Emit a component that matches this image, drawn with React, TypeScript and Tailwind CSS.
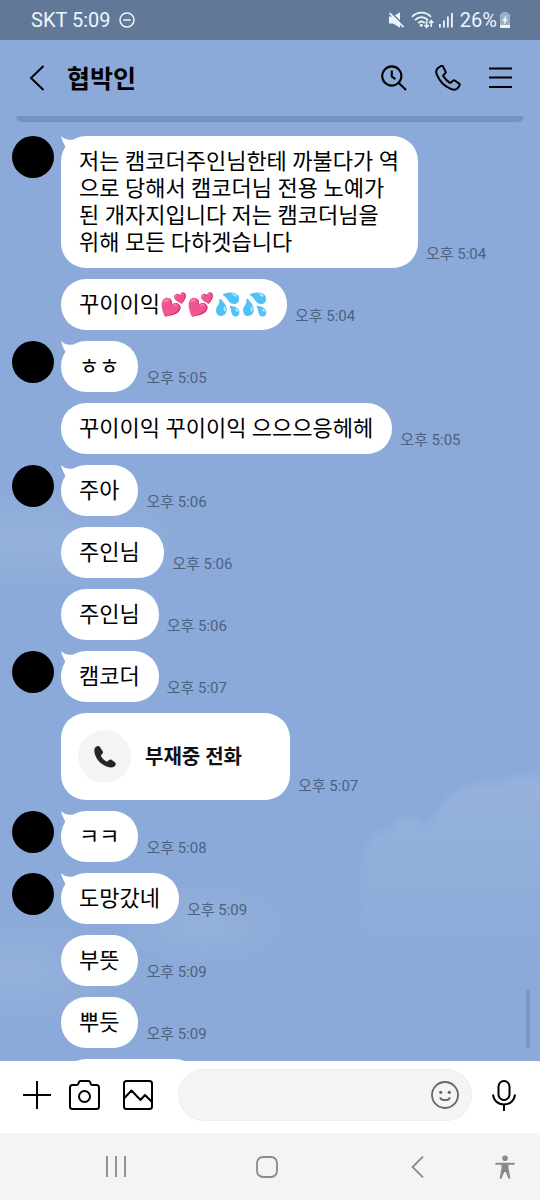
import React from 'react';
import clsx from 'clsx';

interface Message {
  id: number;
  type: 'text' | 'call' | 'pending';
  text: string;
  time: string;
  first?: boolean;
}

const messages: Message[] = [
  {
    id: 1,
    type: 'text',
    text: '저는 캠코더주인님한테 까불다가 역\n으로 당해서 캠코더님 전용 노예가\n된 개자지입니다 저는 캠코더님을\n위해 모든 다하겟습니다',
    time: '오후 5:04',
    first: true,
  },
  { id: 2, type: 'text', text: '꾸이이익💕💕💦💦', time: '오후 5:04' },
  { id: 3, type: 'text', text: 'ㅎㅎ', time: '오후 5:05', first: true },
  { id: 4, type: 'text', text: '꾸이이익 꾸이이익 으으으응헤헤', time: '오후 5:05' },
  { id: 5, type: 'text', text: '주아', time: '오후 5:06', first: true },
  { id: 6, type: 'text', text: '주인님 ', time: '오후 5:06' },
  { id: 7, type: 'text', text: '주인님', time: '오후 5:06' },
  { id: 8, type: 'text', text: '캠코더', time: '오후 5:07', first: true },
  { id: 9, type: 'call', text: '부재중 전화', time: '오후 5:07' },
  { id: 10, type: 'text', text: 'ㅋㅋ', time: '오후 5:08', first: true },
  { id: 11, type: 'text', text: '도망갔네', time: '오후 5:09', first: true },
  { id: 12, type: 'text', text: '부뜻', time: '오후 5:09' },
  { id: 13, type: 'text', text: '뿌듯', time: '오후 5:09' },
  { id: 14, type: 'pending', text: '', time: '' },
];

function StatusBar() {
  return (
    <div className="flex h-10 shrink-0 items-center bg-[#627897] pr-[29px] pl-[31px] text-xl text-[#edf5ff]">
      <span>SKT 5:09</span>
      <svg width="16" height="16" viewBox="0 0 16 16" fill="none" stroke="currentColor" strokeWidth="1.5" className="ml-2">
        <circle cx="8" cy="8" r="7" />
        <path d="M4.2 8h7.6" />
      </svg>
      <div className="ml-auto flex items-center">
        {/* Muted speaker */}
        <svg width="17" height="16" viewBox="0 0 17 16" fill="currentColor">
          <path d="M1 4.500h4L12 .2v15.600L5 11.500H1z" />
          <path d="M2.800 .2l14 14" stroke="#627897" strokeWidth="1.500" />
          <path d="M1.600 1.200l14 14" stroke="currentColor" strokeWidth="1.700" />
        </svg>
        {/* Wifi with traffic arrows */}
        <svg width="24" height="18" viewBox="0 0 24 18" fill="none" stroke="currentColor" strokeWidth="1.8" className="ml-1.5">
          <path d="M1 5.800C6 .2 15 .2 20 5.800M4 9.200c3.800-4 9.200-4 13 0M7.200 12.200c2-2 4.600-2 6.600 0" />
          <circle cx="10.200" cy="14.300" r="1.500" fill="currentColor" stroke="none" />
          <path d="M15.600 9.500v6.500M13.400 14l2.200 2.300 2.200-2.300M20.200 16V10M18 12l2.200-2.300 2.200 2.300" strokeWidth="1.500" />
        </svg>
        <svg width="15" height="16" viewBox="0 0 15 16" fill="currentColor" className="ml-1">
          <path d="M0 12h1.800v3.500H0zM4 8.500h1.800v7H4zM8 4.500h1.800v11H8zM12 1h1.800v14.500H12z" />
        </svg>
        <span className="ml-1.5">26%</span>
        <svg width="12" height="16" viewBox="0 0 12 16" className="ml-0.5">
          <path d="M3.500 0h5v1.500H10q1 0 1 1V16H1V2.500q0-1 1-1h1.500z" fill="#9dadc3" />
          <path d="M1 13h10v2q0 1-1 1H2q-1 0-1-1z" fill="currentColor" />
          <path d="M7.500 3L3.200 8.800h2.300L4.700 13l4.100-5.800H6.600z" fill="currentColor" />
        </svg>
      </div>
    </div>
  );
}

function ChatHeader() {
  return (
    <header className="flex h-[76px] shrink-0 items-center pr-7 pl-[29px] text-black">
      <button aria-label="뒤로">
        <svg width="16" height="26" viewBox="0 0 16 26" fill="none" stroke="currentColor" strokeWidth="2">
          <path d="M14.500 1L2 13l12.500 12" />
        </svg>
      </button>
      <h1 className="ml-[22px] pt-1 text-[25px] leading-8 font-bold">협박인</h1>
      <div className="ml-auto flex items-center gap-7">
        <button aria-label="검색">
          <svg width="26" height="26" viewBox="0 0 26 26" fill="none" stroke="currentColor" strokeWidth="2.100">
            <circle cx="10.800" cy="11" r="9.600" />
            <path d="M17.600 17.800L25 25M10.800 5.500v6l3.600 2.700" />
          </svg>
        </button>
        <button aria-label="통화">
          <svg width="26" height="26" viewBox="0 0 26 26" fill="none" stroke="currentColor" strokeWidth="2" strokeLinejoin="round">
            <path d="M5.600 1.200L2.900 3.100C1 4.600.9 7.500 2 10c2.600 6.200 7.700 11.300 13.800 13.900 2.500 1.100 5 1.200 6.600-.5l2-2.500c.6-.8.500-1.700-.3-2.300l-4-2.900c-.8-.6-1.700-.5-2.400.2l-1.600 1.600c-.5.400-1 .4-1.500.1-2.500-1.700-4.500-3.700-6.200-6.200-.3-.5-.3-1 .1-1.500l1.600-1.500c.7-.7.8-1.600.2-2.400L8.100 1.600c-.6-.8-1.700-.9-2.500-.4z" />
          </svg>
        </button>
        <button aria-label="메뉴">
          <svg width="23" height="22" viewBox="0 0 23 22" fill="none" stroke="currentColor" strokeWidth="2">
            <path d="M0 1.500h23M0 10.500h23M0 20h23" />
          </svg>
        </button>
      </div>
    </header>
  );
}

function Clouds() {
  return (
    <svg
      className="absolute inset-0 h-full w-full"
      viewBox="0 0 540 945"
      preserveAspectRatio="none"
      aria-hidden="true"
    >
      <defs>
        <linearGradient id="cloud" x1="0" y1="0" x2="0" y2="1">
          <stop offset="0" stopColor="#fff" stopOpacity="0.09" />
          <stop offset="1" stopColor="#fff" stopOpacity="0" />
        </linearGradient>
        <radialGradient id="haze">
          <stop offset="0" stopColor="#fff" stopOpacity="0.08" />
          <stop offset="1" stopColor="#fff" stopOpacity="0" />
        </radialGradient>
        <filter id="soft">
          <feGaussianBlur stdDeviation="3" />
        </filter>
      </defs>
      <path
        d="M362 850V745q2-12 10-22 6-10 20-10 8-14 22-12 8 4 10 12 12-14 22-30 22-20 52-14 14-12 52-8v189z"
        fill="url(#cloud)"
        filter="url(#soft)"
      />
      <g fill="url(#haze)">
        <ellipse cx="30" cy="425" rx="170" ry="55" />
        <ellipse cx="20" cy="855" rx="110" ry="55" />
        <ellipse cx="205" cy="810" rx="90" ry="45" />
      </g>
    </svg>
  );
}

function CallCard({ text }: { text: string }) {
  return (
    <button className="flex h-[87px] w-[229px] items-center rounded-[25px] bg-white pl-[17px]">
      <span className="flex h-[53px] w-[53px] items-center justify-center rounded-full bg-[#f4f4f4]">
        <svg width="24" height="24" viewBox="0 0 24 24" fill="#262626">
          <path d="M4.200 1.200C2.300 1.700 1.200 3.400 1.300 5.600c.4 8.500 8.200 16.300 16.700 16.900 2.200.1 4-1 4.600-2.800.3-1 .1-1.800-.7-2.400l-3.500-2.500c-.8-.6-1.700-.5-2.400.1l-1.500 1.300c-.5.4-1 .4-1.500.1-2-1.300-3.500-2.900-4.800-4.900-.3-.5-.3-1 .1-1.400l1.200-1.500c.6-.7.7-1.500.2-2.300L7.200 2.500C6.500 1.300 5.500.9 4.200 1.200z" />
        </svg>
      </span>
      <span className="ml-3.5 text-xl font-bold text-[#111]">{text}</span>
    </button>
  );
}

function MessageRow({ message }: { message: Message }) {
  return (
    <li className="flex items-start">
      <div className={clsx('mr-[7px] h-[42px] w-[42px] shrink-0 rounded-full', message.first && 'bg-black')} />
      <div className="flex items-end">
        {message.type === 'call' && <CallCard text={message.text} />}
        {message.type === 'pending' && <div className="h-[51px] w-[139px] rounded-[25px] bg-white" />}
        {message.type === 'text' && (
          <div className="relative rounded-[25px] bg-white py-3 pr-[19px] pl-[18px]">
            {message.first && (
              <svg width="16" height="16" viewBox="0 0 16 16" fill="#fff" className="absolute top-0 left-0">
                <path d="M0 0C3 3 6 4.200 12 3.500L15 8 8 15 4.500 11C2.500 7.500 1 4 0 0z" />
              </svg>
            )}
            <p className="relative text-[22px] leading-[27px] whitespace-pre text-black">{message.text}</p>
          </div>
        )}
        <time className="mb-1 ml-2 text-[15px] leading-5 whitespace-nowrap text-[#4d6180]">{message.time}</time>
      </div>
    </li>
  );
}

function Composer() {
  return (
    <form className="flex h-[72px] shrink-0 items-center bg-white pr-6 pb-1 pl-[23px] text-black" onSubmit={(e) => e.preventDefault()}>
      <button type="button" aria-label="추가" className="shrink-0">
        <svg width="28" height="28" viewBox="0 0 28 28" fill="none" stroke="currentColor" strokeWidth="2">
          <path d="M0 14h28M14 0v28" />
        </svg>
      </button>
      <button type="button" aria-label="카메라" className="ml-[18px] shrink-0">
        <svg width="31" height="30" viewBox="0 0 31 30" fill="none" stroke="currentColor" strokeWidth="2" strokeLinejoin="round">
          <path d="M3.500 5H8c1.500 0 1.300-1.200 1.800-2.600C10.200 1.300 10.500 1 11.500 1h8c1 0 1.300.3 1.700 1.400.5 1.400.3 2.600 1.800 2.600h4.500C29 5 30 6 30 7.500V26.500c0 1.500-1 2.500-2.500 2.500h-24C2 29 1 28 1 26.500V7.500C1 6 2 5 3.500 5z" />
          <circle cx="15.500" cy="16.500" r="5.500" />
        </svg>
      </button>
      <button type="button" aria-label="사진" className="ml-[23px] shrink-0">
        <svg width="30" height="30" viewBox="0 0 30 30" fill="none" stroke="currentColor" strokeWidth="2" strokeLinejoin="round">
          <rect x="1" y="1" width="28" height="28" rx="2.500" />
          <path d="M1 18.500l7.500-8 9 9.500 4.500-5 7 7" />
        </svg>
      </button>
      <div className="ml-[25px] flex h-[52px] min-w-0 flex-1 items-center rounded-full border border-[#ededed] bg-[#f4f4f4] pr-3 pl-5">
        <input aria-label="메시지 입력" className="min-w-0 flex-1 bg-transparent text-[22px] outline-none" />
        <button type="button" aria-label="이모티콘" className="shrink-0">
          <svg width="28" height="28" viewBox="0 0 28 28" fill="none" stroke="#666" strokeWidth="1.800">
            <circle cx="14" cy="14" r="13" />
            <path d="M9 16.500c1.800 3.600 8.200 3.600 10 0" />
            <circle cx="9.700" cy="11.300" r="1.600" fill="#666" stroke="none" />
            <circle cx="18.300" cy="11.300" r="1.600" fill="#666" stroke="none" />
          </svg>
        </button>
      </div>
      <button type="button" aria-label="음성 메시지" className="ml-5 shrink-0">
        <svg width="24" height="31" viewBox="0 0 24 31" fill="none" stroke="currentColor" strokeWidth="2">
          <rect x="6.500" y="1" width="11" height="19" rx="5.500" />
          <path d="M1 14.500c.5 6 5 10 11 10s10.500-4 11-10M12 24.500V31" />
        </svg>
      </button>
    </form>
  );
}

function NavBar() {
  return (
    <nav className="flex h-[67px] shrink-0 items-center bg-[#f4f4f4] pl-10 text-[#8a8a8a]">
      <button aria-label="최근 앱" className="flex flex-1 justify-center">
        <svg width="20" height="21" viewBox="0 0 20 21" fill="none" stroke="currentColor" strokeWidth="1.800">
          <path d="M1 0v21M10 0v21M19 0v21" />
        </svg>
      </button>
      <button aria-label="홈" className="flex flex-1 justify-center">
        <svg width="22" height="22" viewBox="0 0 22 22" fill="none" stroke="currentColor" strokeWidth="1.800">
          <rect x="1" y="1" width="20" height="20" rx="6" />
        </svg>
      </button>
      <button aria-label="이전" className="flex flex-1 justify-center">
        <svg width="13" height="22" viewBox="0 0 13 22" fill="none" stroke="currentColor" strokeWidth="1.800">
          <path d="M12 .5L1.500 11 12 21.500" />
        </svg>
      </button>
      <button aria-label="접근성" className="w-[47px] pl-0.5">
        <svg width="20" height="24" viewBox="0 0 20 24" fill="currentColor">
          <circle cx="10" cy="3.200" r="2.800" />
          <path d="M1 7.800h18c1 0 1 2 0 2h-5.500V13l1.800 10c.1 1-1.600 1.200-1.900.3L10.700 17H9.300l-2.700 6.300c-.3.900-2 .7-1.900-.3L6.500 13V9.800H1c-1 0-1-2 0-2z" />
        </svg>
      </button>
    </nav>
  );
}

export default function App() {
  return (
    <div className="flex h-screen flex-col overflow-hidden bg-[#8caad9] font-['Roboto','Noto_Sans_CJK_KR',sans-serif]">
      <StatusBar />
      <ChatHeader />
      <main className="relative min-h-0 flex-1 overflow-hidden">
        <Clouds />
        {/* Bottom edge of the collapsed notice */}
        <div className="mx-4 h-1.5 rounded-b-[10px] bg-[#7793bb]" />
        <ul className="relative mt-3.5 flex flex-col gap-[11px] pl-3">
          {messages.map((message) => (
            <MessageRow key={message.id} message={message} />
          ))}
        </ul>
        <div className="absolute right-2.5 bottom-3 h-[60px] w-1 rounded-full bg-[#7e97c3]" />
      </main>
      <Composer />
      <NavBar />
    </div>
  );
}
